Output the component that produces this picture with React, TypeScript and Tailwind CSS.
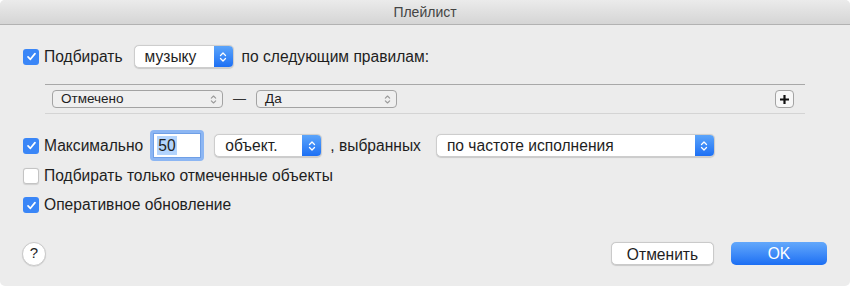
import React from 'react'

const font = { fontFamily: '"Liberation Sans", Arial, sans-serif' }

function Check({ checked }: { checked: boolean }) {
  if (!checked) {
    return (
      <span className="w-4 h-4 rounded-[3px] bg-white border border-[#c4c4c4] shadow-[0_0.5px_1px_rgba(0,0,0,0.12)] shrink-0" />
    )
  }
  return (
    <span className="w-4 h-4 rounded-[3px] bg-[#3a86f7] flex items-center justify-center shrink-0">
      <svg width="11" height="11" viewBox="0 0 11 11" fill="none">
        <path d="M2 5.8 L4.4 8.3 L9 2.6" stroke="white" strokeWidth="1.7" strokeLinecap="round" strokeLinejoin="round" />
      </svg>
    </span>
  )
}

function Arrows({ color, w = 8, h = 12 }: { color: string; w?: number; h?: number }) {
  return (
    <svg width={w} height={h} viewBox="0 0 8 12" fill="none">
      <path d="M1.5 4.5 L4 2 L6.5 4.5" stroke={color} strokeWidth="1.3" strokeLinecap="round" strokeLinejoin="round" />
      <path d="M1.5 7.5 L4 10 L6.5 7.5" stroke={color} strokeWidth="1.3" strokeLinecap="round" strokeLinejoin="round" />
    </svg>
  )
}

function Popup({ label, width }: { label: string; width: string }) {
  return (
    <div className={`${width} h-[23px] flex rounded-[5px] bg-white border border-[#cdcdcd] shadow-[0_0.5px_1px_rgba(0,0,0,0.15)] overflow-hidden shrink-0`}>
      <span className="flex-1 pl-[10px] text-[15.6px] leading-[21px] text-[#1e1e1e] whitespace-nowrap">{label}</span>
      <span className="w-[19px] h-full bg-gradient-to-b from-[#5ba4fa] to-[#1c6ff4] flex items-center justify-center">
        <Arrows color="white" />
      </span>
    </div>
  )
}

function MiniPopup({ label, width }: { label: string; width: string }) {
  return (
    <div className={`${width} h-[18px] flex items-center rounded-[4px] border border-[#a3a3a3] bg-[#efefef] pl-[8px] pr-[5px]`}>
      <span className="flex-1 text-[13.5px] leading-[16px] text-[#1e1e1e]">{label}</span>
      <Arrows color="#9a9a9a" w={7} h={11} />
    </div>
  )
}

export default function App() {
  return (
    <div style={font} className="w-[850px] h-[286px] bg-[#ececec] rounded-[5px] overflow-hidden flex flex-col text-[#1e1e1e] text-[15.6px]">
      {/* Title bar */}
      <div className="h-[25px] shrink-0 bg-gradient-to-b from-[#ebebeb] to-[#d5d5d5] border-b border-[#b2b2b2] flex items-center justify-center">
        <span className="text-[14px] text-[#444]">Плейлист</span>
      </div>

      {/* Row 1 */}
      <div className="mt-[20px] pl-[23px] h-[23px] flex items-center whitespace-nowrap">
        <Check checked />
        <span className="ml-[5px]">Подбирать</span>
        <div className="ml-[11px]">
          <Popup label="музыку" width="w-[100px]" />
        </div>
        <span className="ml-[8px]">по следующим правилам:</span>
      </div>

      {/* Rules */}
      <div className="mt-[16px] ml-[45px] w-[760px] h-[30px] border-t border-b border-t-[#a8a8a8] border-b-[#d4d4d4] flex items-center pl-[7px] pr-[11px]">
        <MiniPopup label="Отмечено" width="w-[171px]" />
        <span className="mx-[10px] text-[13px] text-[#333]">—</span>
        <MiniPopup label="Да" width="w-[141px]" />
        <div className="flex-1" />
        <button className="w-[19px] h-[18px] rounded-[4px] border border-[#a3a3a3] bg-[#f7f7f7] flex items-center justify-center">
          <svg width="11" height="11" viewBox="0 0 11 11">
            <path d="M5.5 1 V10 M1 5.5 H10" stroke="#111" strokeWidth="2.2" />
          </svg>
        </button>
      </div>

      {/* Row 2 */}
      <div className="mt-[16px] pl-[23px] h-[31px] flex items-center whitespace-nowrap">
        <Check checked />
        <span className="ml-[5px]">Максимально</span>
        <div className="ml-[7px] w-[54px] h-[31px] rounded-[4px] bg-[#8cb6f3] p-[3px] shrink-0">
          <div className="w-full h-full bg-white border border-[#6f9fe6] flex items-center pl-[3px]">
            <span className="bg-[#b3d4fd] leading-[19px] px-[1px]">50</span>
          </div>
        </div>
        <div className="ml-[10px]">
          <Popup label="объект." width="w-[108px]" />
        </div>
        <span className="ml-[8px]">, выбранных</span>
        <div className="ml-[15px]">
          <Popup label="по частоте исполнения" width="w-[279px]" />
        </div>
      </div>

      {/* Row 3 */}
      <div className="mt-[5px] pl-[23px] h-[20px] flex items-center">
        <Check checked={false} />
        <span className="ml-[5px]">Подбирать только отмеченные объекты</span>
      </div>

      {/* Row 4 */}
      <div className="mt-[9px] pl-[23px] h-[20px] flex items-center">
        <Check checked />
        <span className="ml-[5px]">Оперативное обновление</span>
      </div>

      {/* Buttons */}
      <div className="mt-[27px] h-[23px] flex items-center pl-[22px] pr-[23px]">
        <button className="w-[24px] h-[24px] rounded-full bg-white border border-[#c9c9c9] shadow-[0_0.5px_1px_rgba(0,0,0,0.15)] flex items-center justify-center text-[15px] text-[#222]">
          ?
        </button>
        <div className="flex-1" />
        <button className="w-[103px] h-[23px] rounded-[5px] bg-white border border-[#cacaca] shadow-[0_0.5px_1px_rgba(0,0,0,0.15)] text-[#1e1e1e]">
          Отменить
        </button>
        <button className="ml-[17px] w-[96px] h-[23px] rounded-[5px] bg-gradient-to-b from-[#63a8fb] to-[#1b6ef3] text-white">
          OK
        </button>
      </div>
    </div>
  )
}
